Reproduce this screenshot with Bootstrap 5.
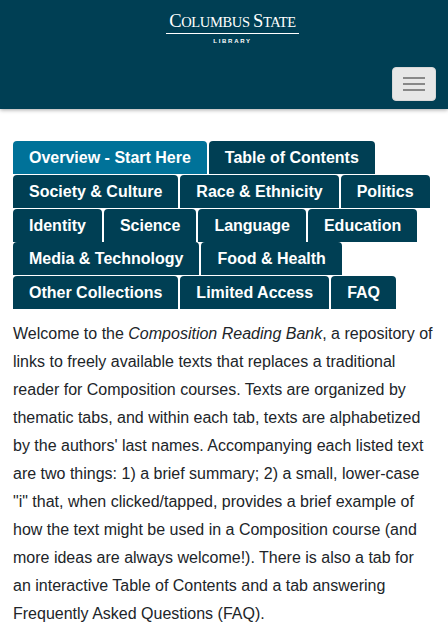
<!DOCTYPE html>
<html lang="en">
<head>
<meta charset="utf-8">
<title>Composition Reading Bank</title>
<link href="https://cdn.jsdelivr.net/npm/bootstrap@5.3.0/dist/css/bootstrap.min.css" rel="stylesheet">
<style>
html, body { height: 627px; overflow: hidden; }
body { font-family: "Liberation Sans", Arial, sans-serif; font-size: 16px; color: #212529; background: #fff; }
.site-head { background: #003f54; height: 109px; padding: 0 12px 8px 12px; box-shadow: 0 1px 4px rgba(0,0,0,.35); }
.brand-box { width: 133px; margin: 11px 0 0 17px; color: #fff; text-align: center; }
.brand-name { font-family: "Liberation Serif", serif; font-size: 14.5px; line-height: 21px; white-space: nowrap; display: block; letter-spacing: -.35px; }
.brand-cap { font-size: 18.5px; }
.brand-rule { border-top: 1px solid #fff; display: block; }
.brand-sub { font-size: 6px; font-weight: 700; letter-spacing: 1.7px; line-height: 8px; margin-top: 3px; display: block; }
.menu-btn { width: 44px; height: 34px; background: #e7e7e7; border: 1px solid #d8d8d8; border-radius: 4px; padding: 0; }
.menu-bars { width: 22px; height: 2px; background: #888; box-shadow: 0 6px 0 #888, 0 -6px 0 #888; display: block; margin: 0 auto; }
.tab-strip { gap: .75px 2px; margin: 32px 13px 0; }
.tab-strip .nav-link { background: #003f54; color: #fff; font-weight: 700; line-height: 18px; padding: 8px 16px 7px; border-radius: 4px 4px 0 0; }
.tab-strip .nav-link.active { background: #007299; color: #fff; }
.intro-copy { margin: 11px 13px 0; line-height: 28px; }
</style>
</head>
<body>
<header class="site-head d-flex flex-column">
  <div class="d-flex justify-content-center">
    <a class="brand-box text-decoration-none" href="#">
      <span class="brand-name"><span class="brand-cap">C</span>OLUMBUS <span class="brand-cap">S</span>TATE</span>
      <span class="brand-rule"></span>
      <span class="brand-sub">LIBRARY</span>
    </a>
  </div>
  <div class="d-flex justify-content-end mt-auto">
    <button class="menu-btn d-flex align-items-center" type="button" aria-label="Menu"><span class="menu-bars"></span></button>
  </div>
</header>
<main>
  <ul class="nav tab-strip">
    <li class="nav-item"><a class="nav-link active" href="#">Overview - Start Here</a></li>
    <li class="nav-item"><a class="nav-link" href="#">Table of Contents</a></li>
    <li class="nav-item"><a class="nav-link" href="#">Society &amp; Culture</a></li>
    <li class="nav-item"><a class="nav-link" href="#">Race &amp; Ethnicity</a></li>
    <li class="nav-item"><a class="nav-link" href="#">Politics</a></li>
    <li class="nav-item"><a class="nav-link" href="#">Identity</a></li>
    <li class="nav-item"><a class="nav-link" href="#">Science</a></li>
    <li class="nav-item"><a class="nav-link" href="#">Language</a></li>
    <li class="nav-item"><a class="nav-link" href="#">Education</a></li>
    <li class="nav-item"><a class="nav-link" href="#">Media &amp; Technology</a></li>
    <li class="nav-item"><a class="nav-link" href="#">Food &amp; Health</a></li>
    <li class="nav-item"><a class="nav-link" href="#">Other Collections</a></li>
    <li class="nav-item"><a class="nav-link" href="#">Limited Access</a></li>
    <li class="nav-item"><a class="nav-link" href="#">FAQ</a></li>
  </ul>
  <p class="intro-copy">Welcome to the <em>Composition Reading Bank</em>, a repository of links to freely available texts that replaces a traditional reader for Composition courses. Texts are organized by thematic tabs, and within each tab, texts are alphabetized by the authors' last names. Accompanying each listed text are two things: 1) a brief summary; 2) a small, lower-case "i" that, when clicked/tapped, provides a brief example of how the text might be used in a Composition course (and more ideas are always welcome!). There is also a tab for an interactive Table of Contents and a tab answering Frequently Asked Questions (FAQ).</p>
</main>
<script src="https://cdn.jsdelivr.net/npm/bootstrap@5.3.0/dist/js/bootstrap.bundle.min.js"></script>
</body>
</html>
